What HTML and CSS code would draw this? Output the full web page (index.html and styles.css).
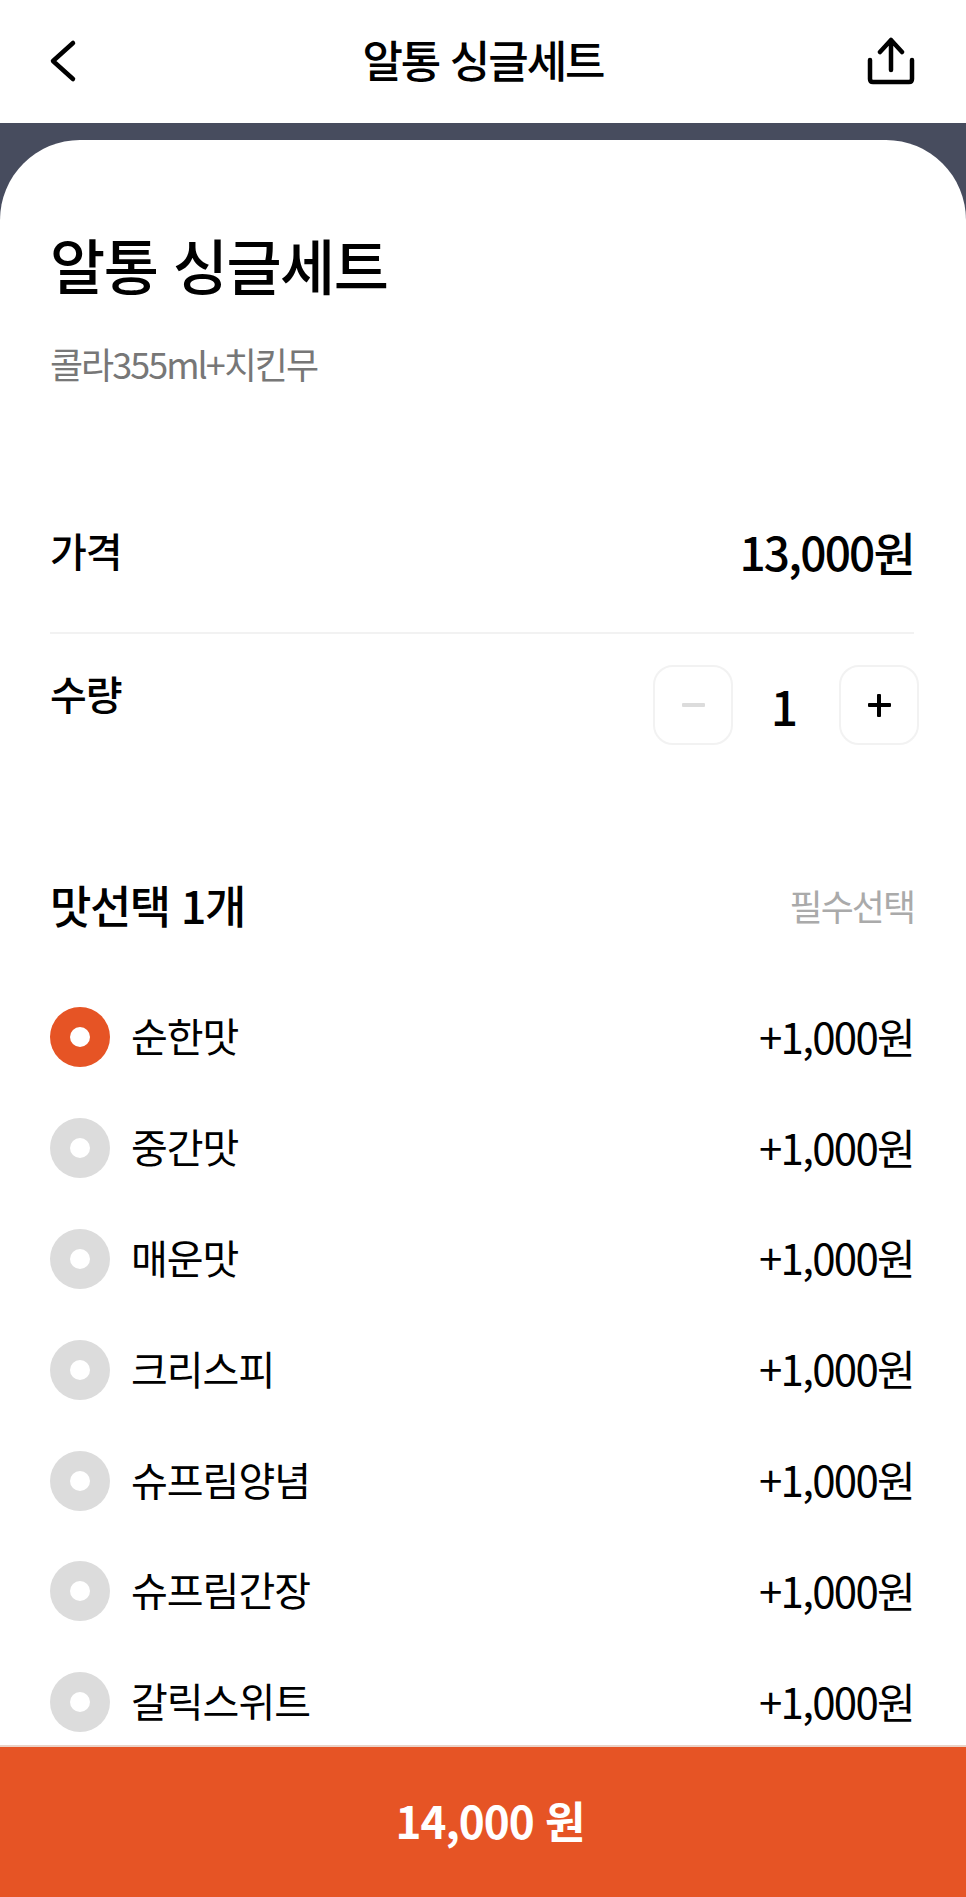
FILE: index.html
```html
<!DOCTYPE html>
<html lang="ko">
<head>
    <meta charset="utf-8">
    <title>알통 싱글세트</title>
    <link rel="stylesheet" href="styles.css">
</head>
<body>
    <div class="page">
        <header class="top-bar">
            <svg class="icon-back" width="32" height="44" viewBox="0 0 32 44">
                <path d="M26 4 L6 22 L26 40" fill="none" stroke="#000" stroke-width="4.5" stroke-linecap="round" stroke-linejoin="round"/>
            </svg>
            <h2 class="top-title">알통 싱글세트</h2>
            <svg class="icon-share" width="48" height="48" viewBox="0 0 48 48">
                <path d="M24 3 V33 M13 15 L24 3 L35 15" fill="none" stroke="#000" stroke-width="4.5" stroke-linecap="round" stroke-linejoin="round"/>
                <path d="M3 23 V42 Q3 45 6 45 H42 Q45 45 45 42 V23" fill="none" stroke="#000" stroke-width="4.5" stroke-linecap="round"/>
            </svg>
        </header>

        <div class="backdrop">
            <main class="card">
                <h1 class="menu-name">알통 싱글세트</h1>
                <p class="menu-desc">콜라355ml+치킨무</p>

                <div class="price-row">
                    <span class="row-label">가격</span>
                    <span class="price">13,000원</span>
                </div>
                <div class="qty-row">
                    <span class="row-label">수량</span>
                    <div class="stepper">
                        <button class="step-btn off" type="button"><span class="minus"></span></button>
                        <span class="qty">1</span>
                        <button class="step-btn" type="button"><span class="plus"></span></button>
                    </div>
                </div>

                <div class="section-head">
                    <h3 class="section-title">맛선택 1개</h3>
                    <span class="required">필수선택</span>
                </div>

                <ul class="options">
                    <li class="option"><span class="radio on"></span><span class="option-name">순한맛</span><span class="option-price">+1,000원</span></li>
                    <li class="option"><span class="radio"></span><span class="option-name">중간맛</span><span class="option-price">+1,000원</span></li>
                    <li class="option"><span class="radio"></span><span class="option-name">매운맛</span><span class="option-price">+1,000원</span></li>
                    <li class="option"><span class="radio"></span><span class="option-name">크리스피</span><span class="option-price">+1,000원</span></li>
                    <li class="option"><span class="radio"></span><span class="option-name">슈프림양념</span><span class="option-price">+1,000원</span></li>
                    <li class="option"><span class="radio"></span><span class="option-name">슈프림간장</span><span class="option-price">+1,000원</span></li>
                    <li class="option"><span class="radio"></span><span class="option-name">갈릭스위트</span><span class="option-price">+1,000원</span></li>
                </ul>
            </main>
        </div>

        <button class="order-btn" type="button">14,000 원</button>
    </div>
</body>
</html>
```

FILE: styles.css
```css
* {
    box-sizing: border-box;
}

body {
    margin: 0;
    background-color: #fff;
    font-family: "Noto Sans CJK KR", "Noto Sans", sans-serif;
    color: #000;
}

.page {
    height: 1897px;
    display: flex;
    flex-direction: column;
    overflow: hidden;
}

.top-bar {
    height: 123px;
    flex-shrink: 0;
    display: grid;
    grid-template-columns: 1fr auto 1fr;
    align-items: center;
    padding: 0 51px 5px;
}

.icon-back {
    margin: 3px 0 0 -4px;
}

.icon-share {
    justify-self: end;
    margin-top: 3px;
}

.top-title {
    margin: 0;
    font-size: 44px;
    font-weight: 500;
    letter-spacing: -2px;
}

.backdrop {
    flex: 1;
    min-height: 0;
    background-color: #474c5e;
    padding-top: 17px;
    display: flex;
}

.card {
    flex: 1;
    background-color: #fff;
    border-radius: 80px 80px 0 0;
    padding: 0 52px 0 50px;
}

.menu-name {
    margin: 82px 0 0;
    font-size: 60px;
    line-height: 84px;
    font-weight: 500;
    letter-spacing: -1.5px;
}

.menu-desc {
    margin: 31px 0 0;
    font-size: 36px;
    line-height: 52px;
    color: #777;
    letter-spacing: -2px;
}

.price-row {
    margin-top: 133px;
    height: 112px;
    display: flex;
    justify-content: space-between;
    align-items: flex-start;
    border-bottom: 2px solid #f2f2f2;
}

.row-label {
    font-size: 40px;
    line-height: 56px;
    font-weight: 500;
    letter-spacing: -1px;
}

.price {
    font-size: 46px;
    line-height: 58px;
    font-weight: 500;
    letter-spacing: -1.8px;
}

.qty-row {
    margin-top: 31px;
    display: flex;
    justify-content: space-between;
    align-items: flex-start;
}

.stepper {
    display: flex;
    align-items: center;
    margin-right: -5px;
}

.step-btn {
    width: 80px;
    height: 80px;
    padding: 0;
    background-color: #fff;
    border: 2px solid #f2f2f2;
    border-radius: 20px;
    display: flex;
    align-items: center;
    justify-content: center;
}

.qty {
    width: 106px;
    padding-right: 3px;
    text-align: center;
    font-size: 48px;
    font-weight: 500;
}

.minus,
.plus {
    display: block;
    position: relative;
    width: 23px;
    height: 4px;
    background-color: #000;
    border-radius: 1px;
}

.plus::after {
    content: "";
    position: absolute;
    left: 9.5px;
    top: -9.5px;
    width: 4px;
    height: 23px;
    background-color: #000;
    border-radius: 1px;
}

.minus {
    background-color: #dcdcdc;
}

.section-head {
    margin-top: 128px;
    display: flex;
    justify-content: space-between;
    align-items: center;
}

.section-title {
    margin: 0;
    font-size: 45px;
    line-height: 64px;
    font-weight: 500;
    letter-spacing: -1.5px;
}

.required {
    font-size: 36px;
    color: #aaa;
    letter-spacing: -2px;
}

.options {
    list-style: none;
    margin: 44px 0 0;
    padding: 0;
}

.option {
    height: 110.8px;
    display: flex;
    align-items: center;
}

.radio {
    width: 60px;
    height: 60px;
    margin: 2px 21px 0 0;
    border-radius: 50%;
    background-color: #dcdcdc;
    display: flex;
    align-items: center;
    justify-content: center;
}

.radio::after {
    content: "";
    width: 20px;
    height: 20px;
    border-radius: 50%;
    background-color: #fff;
}

.radio.on {
    background-color: #e65425;
}

.option-name {
    flex: 1;
    padding-bottom: 2px;
    font-size: 40px;
    letter-spacing: -1px;
}

.option-price {
    padding-bottom: 2px;
    font-size: 42px;
    letter-spacing: -1.7px;
}

.order-btn {
    height: 152px;
    flex-shrink: 0;
    padding: 0 0 4px 14px;
    background-color: #e65425;
    border: 0;
    border-top: 2px solid #ead3c8;
    color: #fff;
    font-family: "Noto Sans CJK KR", "Noto Sans", sans-serif;
    font-size: 44px;
    font-weight: 700;
    letter-spacing: -1px;
}
```
